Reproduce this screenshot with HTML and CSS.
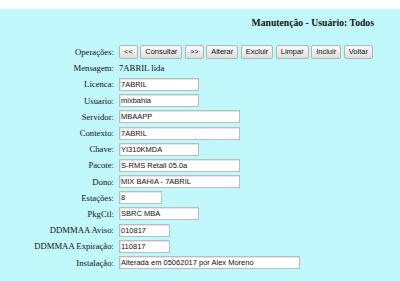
FILE: index.html
```html
<!DOCTYPE html>
<html lang="pt">
<head>
<meta charset="utf-8">
<link rel="stylesheet" href="styles.css">
</head>
<body>
<div class="top"></div>
<div class="page">
  <div class="title">Manutenção - Usuário: Todos</div>
  <div class="form">
    <div class="lbl">Operações:</div>
    <div class="btns">
      <button class="btn">&lt;&lt;</button>
      <button class="btn">Consultar</button>
      <button class="btn">&gt;&gt;</button>
      <button class="btn">Alterar</button>
      <button class="btn">Excluir</button>
      <button class="btn">Limpar</button>
      <button class="btn">Incluir</button>
      <button class="btn">Voltar</button>
    </div>
    <div class="lbl">Mensagem:</div>
    <div class="msg">7ABRIL lida</div>
    <div class="lbl">Licenca:</div>
    <div><input class="in w80" value="7ABRIL"></div>
    <div class="lbl">Usuario:</div>
    <div><input class="in w80" value="mixbahia"></div>
    <div class="lbl">Servidor:</div>
    <div><input class="in w121" value="MBAAPP"></div>
    <div class="lbl">Contexto:</div>
    <div><input class="in w121" value="7ABRIL"></div>
    <div class="lbl">Chave:</div>
    <div><input class="in w80" value="YI310KMDA"></div>
    <div class="lbl">Pacote:</div>
    <div><input class="in w121" value="S-RMS Retail 05.0a"></div>
    <div class="lbl">Dono:</div>
    <div><input class="in w121" value="MIX BAHIA - 7ABRIL"></div>
    <div class="lbl">Estações:</div>
    <div><input class="in w43" value="8"></div>
    <div class="lbl">PkgCtl:</div>
    <div><input class="in w80" value="SBRC MBA"></div>
    <div class="lbl">DDMMAA Aviso:</div>
    <div><input class="in w51" value="010817"></div>
    <div class="lbl">DDMMAA Expiração:</div>
    <div><input class="in w51" value="110817"></div>
    <div class="lbl">Instalação:</div>
    <div><input class="in w181" value="Alterada em 05062017 por Alex Moreno"></div>
  </div>
</div>
</body>
</html>
```
FILE: styles.css
```css
html, body {
  margin: 0;
  padding: 0;
  background: #ffffff;
}
body {
  font-family: "Liberation Serif", "Times New Roman", serif;
  color: #111;
}
.top {
  height: 9px;
  background: #ffffff;
}
.page {
  background: #c0f8fb;
  height: 272px;
  overflow: hidden;
}
.title {
  text-align: right;
  padding: 8px 26px 0 0;
  font-weight: bold;
  font-size: 9.7px;
  line-height: 12px;
  height: 12px;
  margin-bottom: 15px;
}
.form {
  display: grid;
  grid-template-columns: 117px auto;
  column-gap: 2px;
  grid-auto-rows: 16.2px;
  align-items: center;
}
.lbl {
  text-align: right;
  padding-right: 3px;
  font-size: 8.7px;
  white-space: nowrap;
}
.msg {
  font-size: 8.7px;
}
.btns {
  display: flex;
  gap: 2.5px;
}
.btn {
  font-family: "Liberation Sans", Arial, sans-serif;
  font-size: 7.5px;
  height: 14px;
  padding: 0 4px;
  margin: 0;
  border: 1px solid #b4b4b4;
  border-radius: 2px;
  background: linear-gradient(#fbfbfb, #dedede);
  color: #111;
  line-height: 12px;
}
.in {
  display: block;
  box-sizing: border-box;
  height: 13px;
  margin: 0;
  padding: 0 1px;
  font-family: "Liberation Sans", Arial, sans-serif;
  font-size: 7.5px;
  color: #111;
  background: #fff;
  border: 1px solid #bcbcbc;
  box-shadow: inset 1px 1px 0 #e4e4e4;
}
.w43 { width: 43px; }
.w51 { width: 51px; }
.w80 { width: 80px; }
.w121 { width: 121px; }
.w181 { width: 181px; }
```
